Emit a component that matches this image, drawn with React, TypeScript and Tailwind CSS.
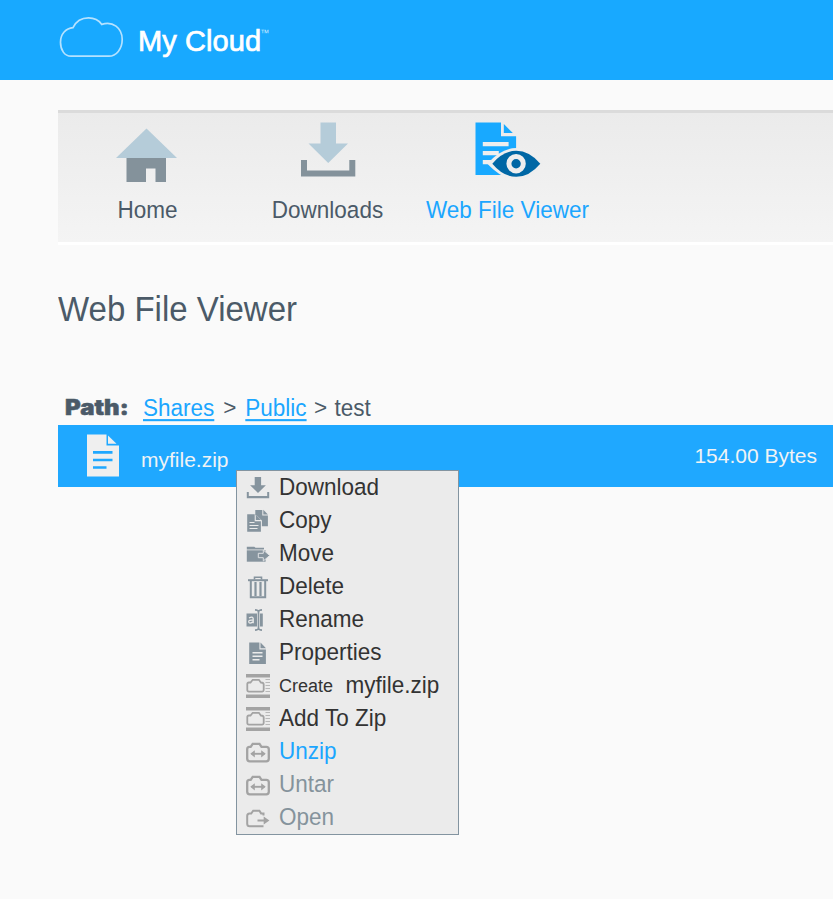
import React from 'react';

type IconName =
  | 'download' | 'copy' | 'move' | 'delete' | 'rename'
  | 'properties' | 'zip' | 'unzip' | 'open';

const SLATE = '#86949e';
const GREY = '#a3a3a3';

function MenuIcon({ name }: { name: IconName }) {
  return (
    <svg width="24" height="24" viewBox="0 0 24 24" className="block shrink-0">
      {name === 'download' && (
        <g fill={SLATE}>
          <path d="M8.7 1h6.4v8.2h4.8L12 17 4.100 9.200h4.600z" />
          <path d="M.8 16h2v4h18.400v-4h2v6.300H.8z" />
        </g>
      )}
      {name === 'copy' && (
        <g fill={SLATE}>
          <path d="M9.300 1h7v5.500h5.600v10.800h-6v-5.800l-5.300-5.300H9.300z" />
          <path d="M17.300.800l4.600 4.600h-4.600z" />
          <path d="M1.200 5.200h7.500v7h6.200v10.600H1.200z" />
          <path d="M9.800 5.400l5.200 5.500H9.800z" />
          <path d="M3.500 13.500h5M3.500 16.500h9M3.500 19.500h8" stroke="#ebebeb" strokeWidth="1.200" />
        </g>
      )}
      {name === 'move' && (
        <g>
          <path d="M.8 4.800h7.500l1.200 1H18v1.700H.8z" fill={SLATE} />
          <path d="M.8 8.300h18.800v11.400H.8z" fill={SLATE} />
          <path d="M12.300 11.300h5V8l6.400 5.500-6.400 5.500v-3.300h-5z" fill={SLATE} stroke="#dfe2e4" strokeWidth="1" />
        </g>
      )}
      {name === 'delete' && (
        <g fill="none" stroke={SLATE}>
          <path d="M2 5.200h20" strokeWidth="2" />
          <path d="M8.500 4.500V2.200h7v2.300" strokeWidth="1.600" />
          <path d="M4.800 6v16.300h14.400V6" strokeWidth="2" />
          <path d="M9.500 7v14M14.500 7v14" strokeWidth="2.200" />
        </g>
      )}
      {name === 'rename' && (
        <g>
          <path d="M.500 5.500h10.500v13H.500zM14 5.500h2.800v13H14z" fill={SLATE} />
          <path d="M9 1.800q3 .200 3.500 1.700.500-1.500 3.500-1.700M9 22.200q3-.200 3.500-1.700.500 1.500 3.500 1.700M12.500 3.500v17" fill="none" stroke={SLATE} strokeWidth="1.700" />
          <path d="M3 10q4-2 4.200.800v4.400M7 12.200q-4.400-.400-4.300 1.700.500 2.300 4.300 0" fill="none" stroke="#ebebeb" strokeWidth="1.300" />
        </g>
      )}
      {name === 'properties' && (
        <g>
          <path d="M3.200 1.500h10.200v7h6.500V23H3.200z" fill={SLATE} />
          <path d="M14.500 1.500l5.500 5.700h-5.500z" fill={SLATE} />
          <path d="M6.500 11.800h10M6.500 15.300h10M6.500 18.800h7" stroke="#ebebeb" strokeWidth="1.400" />
        </g>
      )}
      {name === 'zip' && (
        <g>
          <path d="M0 0h24v3.600H0zM0 20.600h24V24H0z" fill={GREY} />
          <path d="M1.300 10q0-1.500 1.500-1.500h1.700l2.200-2.700h6.200l2 2.700q2.800 0 2.800 2v5.600q0 1.500-1.500 1.500H2.800q-1.500 0-1.500-1.500z" fill="none" stroke={GREY} strokeWidth="1.800" />
          <path d="M19.500 5.500H24M19.500 8.500H24M19.500 11.500H24M19.500 14.500H24M19.500 17.500H24" stroke="#b8b8b8" strokeWidth="1.200" />
        </g>
      )}
      {name === 'unzip' && (
        <g fill="none" stroke={GREY}>
          <path d="M1.200 9.300q0-2.500 2.300-2.500h1.200l2-3h6.800l2 3h4.700q2.600 0 2.600 2.500v9.500q0 2.500-2.600 2.500H3.800q-2.600 0-2.600-2.500z" strokeWidth="2.300" />
          <path d="M5.500 13.800h13" strokeWidth="1.900" />
          <path d="M8.800 10.200v7.200l-4.500-3.600zM15.200 10.200v7.200l4.500-3.600z" fill={GREY} stroke="none" />
        </g>
      )}
      {name === 'open' && (
        <g fill="none" stroke={GREY}>
          <path d="M17.500 20.200H3.700q-2.500 0-2.500-2.500V10q0-2.500 2.300-2.500h1.700l2-2.800h6.200l1.700 2.700h2.400v2.200" strokeWidth="2" />
          <path d="M11.500 14.500h7" strokeWidth="2" />
          <path d="M17.700 10.500v8l5.700-4z" fill={GREY} stroke="none" />
        </g>
      )}
    </svg>
  );
}

function CloudLogo() {
  return (
    <svg width="66" height="44" viewBox="0 0 66 44" className="mt-[15px] block shrink-0">
      <path
        d="M13 41.200C6.500 41.200 2.500 35 2.500 27.200 2.500 19 8 13.200 15 12.600 18 6.500 24 2.900 30.500 2.900c5.800 0 10.300 2.300 13.300 6.500C54.500 5.500 64.200 13 64.200 24.500c0 9.500-6 16.700-13.300 16.700z"
        fill="none"
        stroke="#b5e2ff"
        strokeWidth="1.700"
      />
    </svg>
  );
}

function HomeIcon() {
  return (
    <svg width="66" height="64" viewBox="1.5 0 66 64" className="mr-px">
      <path d="M33 8.500L63.500 38H2.500z" fill="#b5ccd9" />
      <path d="M13 38h39.500v24H42V48.500h-9.500V62H13z" fill="#84929b" />
    </svg>
  );
}

function DownloadsIcon() {
  return (
    <svg width="66" height="60" viewBox="0 0 66 60">
      <path d="M25.500 2.500H41v21h12L33.200 43 13.500 23.500h12z" fill="#b5ccd9" />
      <path d="M6 40h6v10.500h42.300V40h6v16.500H6z" fill="#84929b" />
    </svg>
  );
}

function ViewerIcon() {
  return (
    <svg width="70" height="60" viewBox="0.700 0 70 60">
      <path d="M3.200 2.500h25.500v13.700h15.100V55H3.200z" fill="#18a9ff" />
      <path d="M31.500 4l9 9h-9z" fill="#18a9ff" />
      <path d="M10.500 24.200h25.800M10.500 33.200h16M10.500 42.200h11" stroke="#eee" strokeWidth="4.300" />
      <path d="M15 43.700Q29 28 44 28t28 15.700Q58 59.500 44 59.500T15 43.700z" fill="#eee" />
      <path d="M20 43.700Q31 30.800 44 30.800t24 12.900Q57 56.800 44 56.800T20 43.700z" fill="#0067a5" />
      <circle cx="43.800" cy="43.700" r="7.200" fill="#0067a5" stroke="#eee" strokeWidth="5" />
    </svg>
  );
}

function FileIcon() {
  return (
    <svg width="34" height="44" viewBox="0 0 34 44" className="mt-[9px] ml-[28px] block shrink-0">
      <path d="M1 .500h19.500v11H33V42.500H1z" fill="#efefef" />
      <path d="M22 1.500l8.500 8.200H22z" fill="#efefef" />
      <path d="M7 18.300h19.500M7 26h19.500M7 33.500h13.500" stroke="#1fa8ff" strokeWidth="2.700" />
    </svg>
  );
}

function NavItem({ label, active, children }: { label: string; active?: boolean; children: React.ReactNode }) {
  return (
    <a className={`flex w-[180px] shrink-0 flex-col items-center whitespace-nowrap pt-[7px] ${active ? 'text-[#1ba6ff]' : 'text-[#4b5a68]'}`}>
      <span className="flex h-[75px] items-start">{children}</span>
      <span className="mr-px inline-block origin-[50%_75%] scale-y-[1.08] text-[22.5px] leading-[31px]">{label}</span>
    </a>
  );
}

const items: { icon: IconName; label: string; tone: string }[] = [
  { icon: 'download', label: 'Download', tone: 'text-[#333]' },
  { icon: 'copy', label: 'Copy', tone: 'text-[#333]' },
  { icon: 'move', label: 'Move', tone: 'text-[#333]' },
  { icon: 'delete', label: 'Delete', tone: 'text-[#333]' },
  { icon: 'rename', label: 'Rename', tone: 'text-[#333]' },
  { icon: 'properties', label: 'Properties', tone: 'text-[#333]' },
  { icon: 'zip', label: 'myfile.zip', tone: 'text-[#333]' },
  { icon: 'zip', label: 'Add To Zip', tone: 'text-[#333]' },
  { icon: 'unzip', label: 'Unzip', tone: 'text-[#1ba6ff]' },
  { icon: 'unzip', label: 'Untar', tone: 'text-[#85939c]' },
  { icon: 'open', label: 'Open', tone: 'text-[#85939c]' },
];

function ContextMenu() {
  return (
    <ul className="absolute top-[45px] left-[178px] w-[223px] border border-[#8394a0] bg-[#ebebeb]">
      {items.map((item, i) => (
        <li key={item.label} className={`flex h-[33px] items-center pl-[9px] text-[22.5px] leading-[31px] whitespace-nowrap ${item.tone}`}>
          <MenuIcon name={item.icon} />
          {i === 6 && <span className="mt-px ml-[9px] text-[18px]">Create</span>}
          <span className={`inline-block origin-[50%_75%] scale-y-[1.08] ${i === 6 ? 'ml-[12.5px]' : 'ml-[9px]'}`}>
            {item.label}
          </span>
        </li>
      ))}
    </ul>
  );
}

export default function App() {
  return (
    <div className="min-h-[899px] w-full overflow-hidden bg-[#fafafa] font-['Liberation_Sans',Arial,sans-serif] text-[#4b5a68]">
      <header className="flex h-[80px] bg-[#18a9ff] pl-[58px] text-white">
        <CloudLogo />
        <div className="mt-[23px] ml-[14px] flex items-start">
          <span className="text-[29px] leading-[36px] tracking-[0.1px] whitespace-nowrap [-webkit-text-stroke:0.7px_white]">My Cloud</span>
          <span className="mt-[4px] -ml-px text-[9px] leading-[12px] text-[#c5e8ff]">™</span>
        </div>
      </header>

      <main className="pl-[58px]">
        <nav className="mt-[30px] flex h-[135px] overflow-hidden border-t-[3px] border-b-[3px] border-t-[#dbdbdb] border-b-white bg-linear-to-b from-[#ebebeb] to-[#f4f4f4]">
          <NavItem label="Home"><HomeIcon /></NavItem>
          <NavItem label="Downloads"><DownloadsIcon /></NavItem>
          <NavItem label="Web File Viewer" active><ViewerIcon /></NavItem>
        </nav>

        <h1 className="mt-[45px] origin-[0_75%] scale-y-[1.04] text-[33px] leading-[40px]">Web File Viewer</h1>

        <div className="mt-[63px] flex h-[32px] pl-[7px] text-[22.5px] leading-[32px] whitespace-nowrap">
          <span className="w-[78px] leading-[30px]">
            <span className="inline-block origin-left scale-x-[1.14] font-['Inter',sans-serif] text-[21px] leading-[28px] font-black [-webkit-text-stroke:0.5px_#4b5a68]">Path:</span>
          </span>
          <a className="inline-block origin-[50%_75%] scale-y-[1.05] text-[#1ba6ff] underline decoration-2 underline-offset-[3px]">Shares</a>
          <span className="w-[31px] text-center leading-[30px]">&gt;</span>
          <a className="inline-block origin-[50%_75%] scale-y-[1.05] text-[#1ba6ff] underline decoration-2 underline-offset-[3px]">Public</a>
          <span className="w-[28px] text-center leading-[30px]">&gt;</span>
          <span className="inline-block origin-[50%_75%] scale-y-[1.05]">test</span>
        </div>

        <section className="relative flex h-[62px] bg-[#1fa8ff] text-[21px] leading-[30px] text-[#f0f3f5]">
          <FileIcon />
          <span className="mt-[20px] ml-[21px]">myfile.zip</span>
          <span className="mt-[16px] mr-[16px] ml-auto">154.00 Bytes</span>
          <ContextMenu />
        </section>
      </main>
    </div>
  );
}
